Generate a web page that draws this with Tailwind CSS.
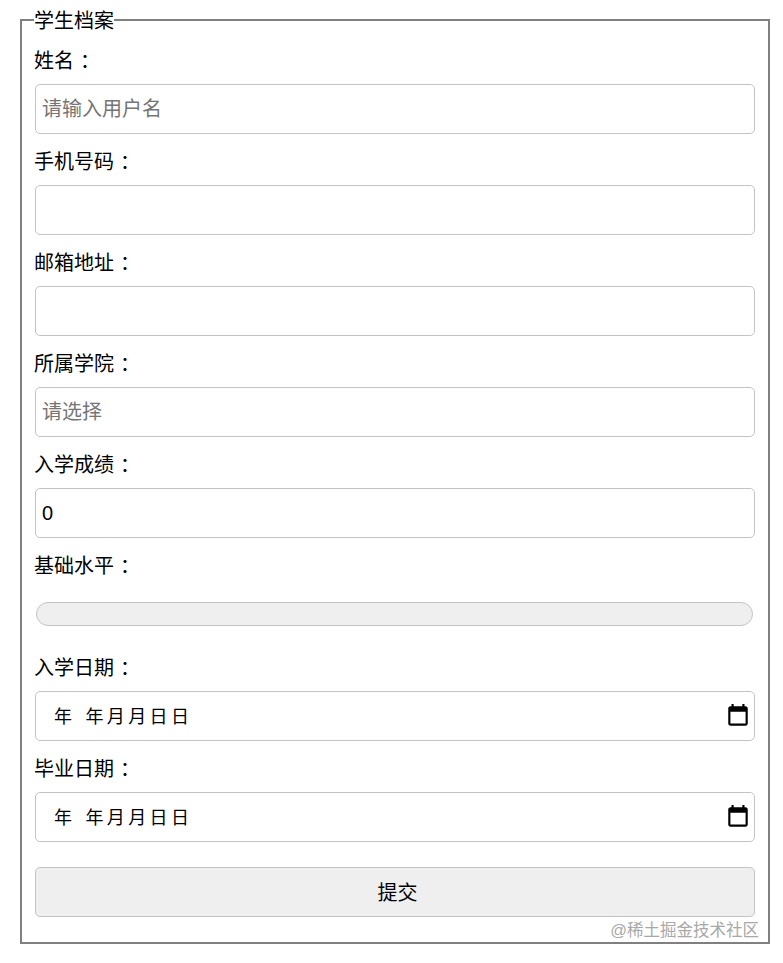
<!DOCTYPE html>
<html lang="zh-CN">
  <head>
    <meta charset="UTF-8" />
    <meta name="viewport" content="width=device-width, initial-scale=1.0" />
    <script src="https://cdn.jsdelivr.net/npm/@tailwindcss/browser@4"></script>
    <title>学生档案</title>
  </head>
  <body class="bg-white text-black text-[20px] font-['Liberation_Sans','Noto_Sans_CJK_SC',sans-serif]">
    <div class="relative h-[963px] pt-2 pl-5 pr-[13px]">
      <fieldset class="h-[936px] border-2 border-[#808080] px-[13px]">
        <legend class="h-[24px] leading-[26px] -ml-px">学生档案</legend>

        <div class="h-[52px] pt-[15px] leading-7 -ml-px">姓名<span class="ml-[6px]">：</span></div>
        <input type="text" placeholder="请输入用户名" class="block w-full h-[50px] px-[6px] pt-px border border-[#c4c4c4] rounded-[5px] placeholder:text-[#757575]" />

        <div class="h-[51px] pt-[14px] leading-7 -ml-px">手机号码<span class="ml-[6px]">：</span></div>
        <input type="text" class="block w-full h-[50px] px-[6px] pt-px border border-[#c4c4c4] rounded-[5px]" />

        <div class="h-[51px] pt-[14px] leading-7 -ml-px">邮箱地址<span class="ml-[6px]">：</span></div>
        <input type="text" class="block w-full h-[50px] px-[6px] pt-px border border-[#c4c4c4] rounded-[5px]" />

        <div class="h-[51px] pt-[14px] leading-7 -ml-px">所属学院<span class="ml-[6px]">：</span></div>
        <input type="text" placeholder="请选择" class="block w-full h-[50px] px-[6px] pt-px border border-[#c4c4c4] rounded-[5px] placeholder:text-[#757575]" />

        <div class="h-[51px] pt-[14px] leading-7 -ml-px">入学成绩<span class="ml-[6px]">：</span></div>
        <input type="text" value="0" class="block w-full h-[50px] px-[6px] border border-[#c4c4c4] rounded-[5px]" />

        <div class="h-[51px] pt-[14px] leading-7 -ml-px">基础水平<span class="ml-[6px]">：</span></div>
        <div class="pt-[13px] pb-[14px] pl-px pr-[2px]">
          <div class="h-6 bg-[#efefef] border border-[#c4c4c4] rounded-full"></div>
        </div>

        <div class="h-[51px] pt-[14px] leading-7 -ml-px">入学日期<span class="ml-[6px]">：</span></div>
        <div class="flex items-center justify-between h-[50px] pl-[18px] pr-[3px] border border-[#c4c4c4] rounded-[5px]">
          <span class="pt-[2px] text-[18px] tracking-[3.4px]">年<span class="ml-[10px]">年月月日日</span></span>
          <svg class="w-[26px] h-[26px]" viewBox="0 0 24 24"><path d="M19 3h-1V1h-2v2H8V1H6v2H5c-1.11 0-2 .9-2 2v14c0 1.1.89 2 2 2h14c1.1 0 2-.9 2-2V5c0-1.1-.9-2-2-2zm0 16H5V8h14v11z" /></svg>
        </div>

        <div class="h-[51px] pt-[14px] leading-7 -ml-px">毕业日期<span class="ml-[6px]">：</span></div>
        <div class="flex items-center justify-between h-[50px] pl-[18px] pr-[3px] border border-[#c4c4c4] rounded-[5px]">
          <span class="pt-[2px] text-[18px] tracking-[3.4px]">年<span class="ml-[10px]">年月月日日</span></span>
          <svg class="w-[26px] h-[26px]" viewBox="0 0 24 24"><path d="M19 3h-1V1h-2v2H8V1H6v2H5c-1.11 0-2 .9-2 2v14c0 1.1.89 2 2 2h14c1.1 0 2-.9 2-2V5c0-1.1-.9-2-2-2zm0 16H5V8h14v11z" /></svg>
        </div>

        <button class="block w-full h-[50px] mt-[25px] pl-[5px] pt-[2px] bg-[#efefef] border border-[#c4c4c4] rounded-[5px]">提交</button>
      </fieldset>

      <span class="absolute right-6 top-[920px] text-[16.5px] leading-5 text-[#a8a8a8]">@稀土掘金技术社区</span>
    </div>
  </body>
</html>
